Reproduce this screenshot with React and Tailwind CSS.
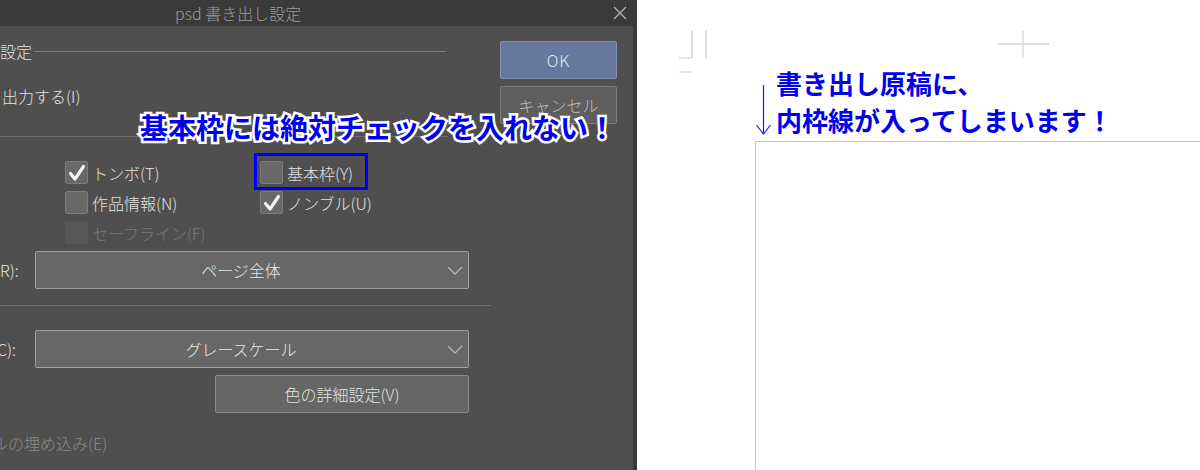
const ui = { fontFamily: '"Noto Sans CJK JP", "Noto Sans", sans-serif' };

function Check({ checked, disabled }) {
  return (
    <span
      className={
        disabled
          ? "flex h-[23px] w-[23px] shrink-0 items-center justify-center rounded-[2px] border border-[#575757] bg-[#565656]"
          : "flex h-[23px] w-[23px] shrink-0 items-center justify-center rounded-[2px] border border-[#7c7c7c] bg-[#686868]"
      }
    >
      {checked && (
        <svg width="18" height="18" viewBox="0 0 18 18" fill="none">
          <path d="M2.5 9.5 L7 15 L15.5 2.5" stroke="#f2f2f2" strokeWidth="3.2" strokeLinecap="round" strokeLinejoin="round" />
        </svg>
      )}
    </span>
  );
}

function CheckRow({ label, checked, disabled }) {
  return (
    <div className="flex h-[23px] items-center gap-[4px]">
      <Check checked={checked} disabled={disabled} />
      <span className={disabled ? "text-[16px] font-light leading-none text-[#787878]" : "text-[16px] font-light leading-none text-[#e2e2e2]"}>
        {label}
      </span>
    </div>
  );
}

function Chevron() {
  return (
    <svg width="16" height="9" viewBox="0 0 16 9" fill="none">
      <path d="M1 1 L8 8 L15 1" stroke="#b4b4b4" strokeWidth="1.4" />
    </svg>
  );
}

function SelectRow({ label, value, shift }) {
  return (
    <div className="flex items-center">
      <span className="w-[35px] shrink-0 text-[16px] font-light leading-none text-[#e2e2e2]">
        <span className={shift ? "-ml-[3px] block" : "block"}>{label}</span>
      </span>
      <div className="relative flex h-[38px] w-[434px] items-center rounded-[2px] border border-[#a0a0a0] bg-[#676767]">
        <span className="flex-1 pr-[22px] text-center text-[16px] font-light text-[#e6e6e6]">{value}</span>
        <span className="absolute right-[5px] top-[14px] flex">
          <Chevron />
        </span>
      </div>
    </div>
  );
}

function ExportDialog() {
  return (
    <div className="flex h-[470px] w-[637px] shrink-0 flex-col bg-[#3a3a3a]">
      {/* title bar */}
      <div className="flex h-[26px] items-center justify-between pl-[175px] pr-[10px]">
        <span className="text-[16px] font-light leading-none text-[#9c9c9c]">psd 書き出し設定</span>
        <svg width="14" height="14" viewBox="0 0 14 14" fill="none">
          <path d="M1 1 L13 13 M13 1 L1 13" stroke="#b0b0b0" strokeWidth="1.4" />
        </svg>
      </div>

      <div className="relative mr-[4px] flex flex-1 bg-[#4f4f4f]">
        {/* settings column */}
        <div className="flex w-[491px] flex-col">
          <div className="mt-[15px] flex h-[20px] items-center gap-[2px] pr-[45px]">
            <span className="text-[16px] font-light leading-none text-[#e2e2e2]">設定</span>
            <div className="h-px flex-1 bg-[#7a7a7a]" />
          </div>
          <div className="mt-[25px] flex h-[20px] items-center pl-[2px]">
            <span className="text-[16px] font-light leading-none text-[#e2e2e2]">出力する(I)</span>
          </div>
          <div className="mr-[43px] mt-[30px] h-px bg-[#6e6e6e]" />

          <div className="mt-[24px] grid grid-cols-[195px_auto] gap-y-[7px] pl-[65px]">
            <CheckRow label="トンボ(T)" checked />
            <div className="relative justify-self-start">
              <CheckRow label="基本枠(Y)" />
              <div className="absolute -bottom-[6px] -left-[6px] -right-[15px] -top-[8px] border-[3px] border-[#0000f0]" />
            </div>
            <CheckRow label="作品情報(N)" />
            <CheckRow label="ノンブル(U)" checked />
            <CheckRow label="セーフライン(F)" disabled />
          </div>

          <div className="mt-[7px]">
            <SelectRow label="R):" value="ページ全体" />
          </div>
          <div className="mt-[16px] h-px bg-[#6e6e6e]" />
          <div className="mt-[24px]">
            <SelectRow label="C):" value="グレースケール" shift />
          </div>
          <div className="mt-[7px] flex pl-[215px]">
            <div className="flex h-[38px] w-[254px] items-center justify-center rounded-[2px] border border-[#8a8a8a] bg-[#666666]">
              <span className="text-[16px] font-light text-[#e2e2e2]">色の詳細設定(V)</span>
            </div>
          </div>
          <div className="mt-[22px]">
            <span className="-ml-[8px] block text-[16px] font-light leading-none text-[#8a8a8a]">ルの埋め込み(E)</span>
          </div>
        </div>

        {/* action buttons */}
        <div className="ml-[9px] flex flex-col gap-[7px] pt-[15px]">
          <div className="flex h-[38px] w-[117px] items-center justify-center rounded-[2px] border border-[#8592b0] bg-[#66789e]">
            <span className="text-[16px] font-light tracking-[1px] text-[#e6e6e6]">OK</span>
          </div>
          <div className="flex h-[38px] w-[117px] items-center justify-center rounded-[2px] border border-[#7c7c7c] bg-[#5e5e5e]">
            <span className="text-[16px] font-light text-[#bdbdbd]">キャンセル</span>
          </div>
        </div>

        {/* warning callout over the dialog */}
        <div className="absolute left-[140px] top-[87px] whitespace-nowrap text-[28px] font-bold leading-none text-[#0000f0] [-webkit-text-stroke:5px_white] [paint-order:stroke_fill]">
          基本枠には絶対チェックを入れない！
        </div>
      </div>
    </div>
  );
}

function PagePreview() {
  return (
    <div className="relative flex h-[470px] flex-1 flex-col bg-white pl-[118px]">
      {/* crop marks */}
      <svg className="absolute left-0 top-0" width="563" height="80" fill="none">
        <path d="M55 31 V58 M69 31 V58" stroke="#cfcfcf" strokeWidth="1.5" />
        <path d="M42 58 H55 M42 72 H55" stroke="#dcdcdc" strokeWidth="1.5" />
        <path d="M361 44 H412 M386 31 V58" stroke="#d6d6d6" strokeWidth="1.3" />
      </svg>

      <div className="mt-[64px] flex items-end">
        <svg width="21" height="52" viewBox="0 0 21 52" fill="none" className="mb-[2px] shrink-0">
          <path d="M8.5 1 V50 M1.5 41 L8.5 50 L15.5 41" stroke="#1a1aff" strokeWidth="1.2" />
        </svg>
        <div className="text-[26px] font-bold leading-[37px] text-[#0000ee]">
          <div>書き出し原稿に、</div>
          <div>内枠線が入ってしまいます！</div>
        </div>
      </div>
      <div className="mt-[3px] flex-1 border-l-[1.5px] border-t-[1.5px] border-[#c8c8c8]" />
    </div>
  );
}

export default function App() {
  return (
    <div className="flex h-[470px] w-[1200px] overflow-hidden bg-white" style={ui}>
      <ExportDialog />
      <PagePreview />
    </div>
  );
}
